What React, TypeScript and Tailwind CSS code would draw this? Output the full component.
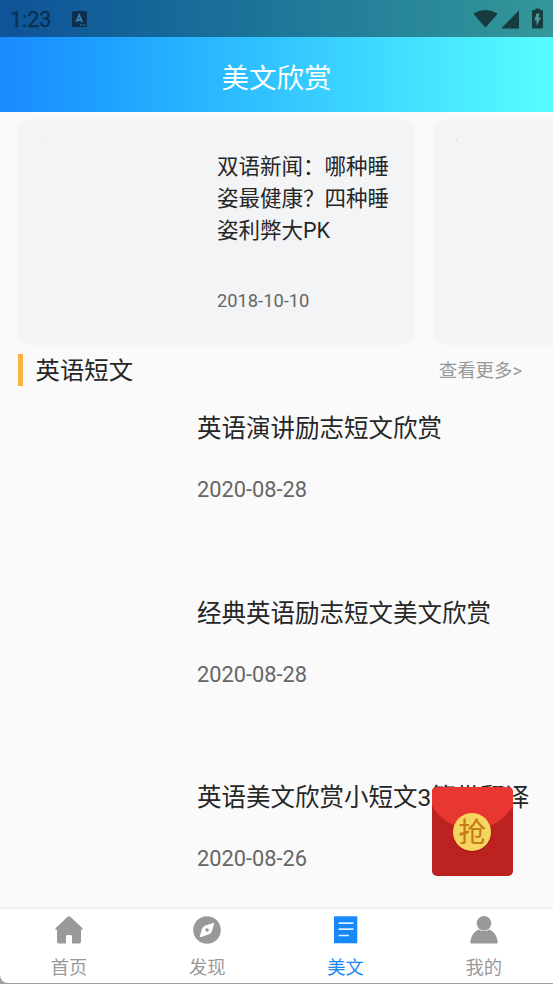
import React from "react";

const articles = [
  { title: "英语演讲励志短文欣赏", date: "2020-08-28" },
  { title: "经典英语励志短文美文欣赏", date: "2020-08-28" },
  { title: "英语美文欣赏小短文3篇带翻译", date: "2020-08-26" },
];

function StatusBar() {
  return (
    <div className="flex h-[37px] items-center justify-between bg-black/40 pl-[10px] pr-[9px] text-[#0b2f4c]">
      <div className="flex items-center gap-[20px]">
        <span className="w-[42px] whitespace-nowrap pt-[2px] text-[21.5px] leading-[37px] [-webkit-text-stroke:0.3px_#0b2f4c]">1:23</span>
        <svg width="15" height="16" viewBox="0 0 15 16">
          <rect width="15" height="16" rx="1.5" fill="currentColor" />
          <path d="M4.2 11 7.2 4l3 7M5.2 9h4" fill="none" stroke="#3a7bab" strokeWidth="1.8" />
          <path d="M8 14h1.2M10.3 14h1.2M12.5 14h1.2" stroke="#5b94bb" strokeWidth="1" />
        </svg>
      </div>
      <svg width="72" height="22" viewBox="0 0 72 22" className="text-[#163c40]" fill="currentColor">
        <path d="M2 5.2Q13.5-1.4 25 5.2V6.6L14.3 18.7Q13.5 19.6 12.7 18.7L2 6.6Z" />
        <path d="M47 2.5v18H30.5Q29.3 20.5 30 19.5Z" />
        <path d="M61.3 2h2V.5h4.4V2h2q1.3 0 1.3 1.3v15.9q0 1.3-1.3 1.3h-8.4Q60 20.5 60 19.2V3.3Q60 2 61.3 2Z" />
        <path d="M64.4 5.5h3.4L66.4 9.5h2.5L64.6 18v-5.5h-2.2Z" fill="#4d999b" />
      </svg>
    </div>
  );
}

function HomeIcon() {
  return (
    <svg width="28" height="28" viewBox="0 0 28 28" fill="#999">
      <path d="M12.6.8q1.4-1.2 2.8 0L27.2 12q1.2 1.8-.4 1.8H26v11.6q0 2-2 2h-7v-7q0-1.5-1.5-1.5h-3q-1.5 0-1.5 1.5v7H4q-2 0-2-2V13.8h-.8q-1.6 0-.4-1.8Z" />
    </svg>
  );
}

function CompassIcon() {
  return (
    <svg width="28" height="28" viewBox="0 0 28 28">
      <circle cx="14" cy="14" r="13.8" fill="#999" />
      <path d="M20.8 7.2 18.4 15.4q-.4 1.5-1.8 2.2L7.2 20.8 9.6 12.6q.4-1.5 1.8-2.2Z" fill="#fff" stroke="#fff" strokeLinejoin="round" />
      <circle cx="14" cy="14" r="1.8" fill="#999" />
    </svg>
  );
}

function ArticleIcon() {
  return (
    <svg width="28" height="28" viewBox="0 0 28 28">
      <path d="M2 .3h23.3v27H2Z" fill="#1989fa" />
      <path d="M7.3 7.2h13.5M7.3 13.2h13.5M7.3 19.5h9" stroke="#d8f1ff" strokeWidth="1.7" strokeLinecap="round" />
    </svg>
  );
}

function UserIcon() {
  return (
    <svg width="28" height="28" viewBox="0 0 28 28" fill="#999">
      <circle cx="14" cy="7.4" r="7.3" />
      <path d="M8.5 13.5q5.5 3 11 0Q27 17.6 27.8 26.4 27.8 27.5 26.8 27.5H1.2Q.2 27.5.2 26.4 1 17.6 8.5 13.5Z" />
    </svg>
  );
}

const tabs = [
  { label: "首页", Icon: HomeIcon, active: false },
  { label: "发现", Icon: CompassIcon, active: false },
  { label: "美文", Icon: ArticleIcon, active: true },
  { label: "我的", Icon: UserIcon, active: false },
];

function RedPacket() {
  return (
    <button className="absolute left-[432px] top-[787px] flex h-[89px] w-[80.5px] items-center justify-center overflow-hidden rounded-[5px] bg-[#bc2220]">
      <svg className="absolute inset-0" width="81" height="89" viewBox="0 0 81 89">
        <path d="M0 0h81v19Q66 42 40.5 42T0 19Z" fill="#e83631" />
      </svg>
      <span className="relative flex h-[38px] w-[38px] items-center justify-center rounded-full bg-[#f7d660] pt-[3px] text-[27.5px] leading-none text-[#c77a18] shadow-[0_1px_1px_rgba(90,0,0,0.3)] [-webkit-text-stroke:0.2px_#c77a18]">
        抢
      </span>
    </button>
  );
}

export default function App() {
  return (
    <div className="relative flex h-[984px] w-[553px] flex-col overflow-hidden bg-[#fafafa] font-[Roboto,'Noto_Sans_CJK_SC',sans-serif] text-[#262626]">
      <header className="h-[112px] shrink-0 bg-linear-to-r from-[#1a8aff] to-[#58fdff]">
        <StatusBar />
        <h1 className="flex h-[75px] items-center justify-center pt-[8px] text-[27.5px] text-white">美文欣赏</h1>
      </header>

      <main className="flex min-h-0 flex-1 flex-col overflow-hidden">
        <section className="flex shrink-0 gap-[18px] overflow-hidden pl-[18px] pt-[7px]">
          <article className="flex h-[226px] w-[397px] shrink-0 rounded-[13px] bg-[#f3f4f6]">
            <div className="w-[199px] shrink-0 pl-[23px] pt-[20px]">
              <div className="h-px w-px bg-[#dcdddf]" />
            </div>
            <div className="pt-[32px]">
              <h2 className="w-[173px] text-[21.5px] leading-[32px]">双语新闻：哪种睡姿最健康？四种睡姿利弊大PK</h2>
              <time className="mt-[42px] block text-[18.3px] leading-[24px] text-[#666]">2018-10-10</time>
            </div>
          </article>
          <article className="h-[226px] w-[397px] shrink-0 rounded-[13px] bg-[#f3f4f6] pl-[23px] pt-[20px]">
            <div className="h-px w-px bg-[#c4c5c7]" />
          </article>
        </section>

        <section className="mt-[9px] flex h-[32px] shrink-0 items-center justify-between pl-[18px] pr-[31px]">
          <h2 className="flex items-center gap-[12.5px] text-[24.4px] leading-[32px]">
            <span className="h-[32px] w-[5px] bg-[#fbb03f]" />
            <span className="pt-[2px]">英语短文</span>
          </h2>
          <a className="pt-[2px] text-[18.4px] leading-[32px] text-[#999]">查看更多&gt;</a>
        </section>

        {articles.map((item) => (
          <article key={item.title} className="flex h-[184.5px] shrink-0 pl-[18px] pt-[24px]">
            <div className="w-[179px] shrink-0">
              <div className="h-px w-px bg-[#dcdcdc]" />
            </div>
            <div className="pt-px">
              <h3 className="whitespace-nowrap text-[24.5px] leading-[36px]">{item.title}</h3>
              <time className="mt-[28px] block text-[21.8px] leading-[30px] text-[#666]">{item.date}</time>
            </div>
          </article>
        ))}
      </main>

      <div className="shrink-0 bg-[#a0a0a0] shadow-[0_-1px_3px_rgba(0,0,0,0.06)]">
        <nav className="grid h-[74px] grid-cols-4 rounded-bl-[8px] bg-white">
          {tabs.map(({ label, Icon, active }) => (
            <div key={label} className={`flex flex-col items-center pt-[7px] ${active ? "text-[#1989fa]" : "text-[#999]"}`}>
              <Icon />
              <span className="mt-[10px] text-[18.3px] leading-[28px]">{label}</span>
            </div>
          ))}
        </nav>
        <div className="h-px" />
      </div>
      <RedPacket />
    </div>
  );
}
